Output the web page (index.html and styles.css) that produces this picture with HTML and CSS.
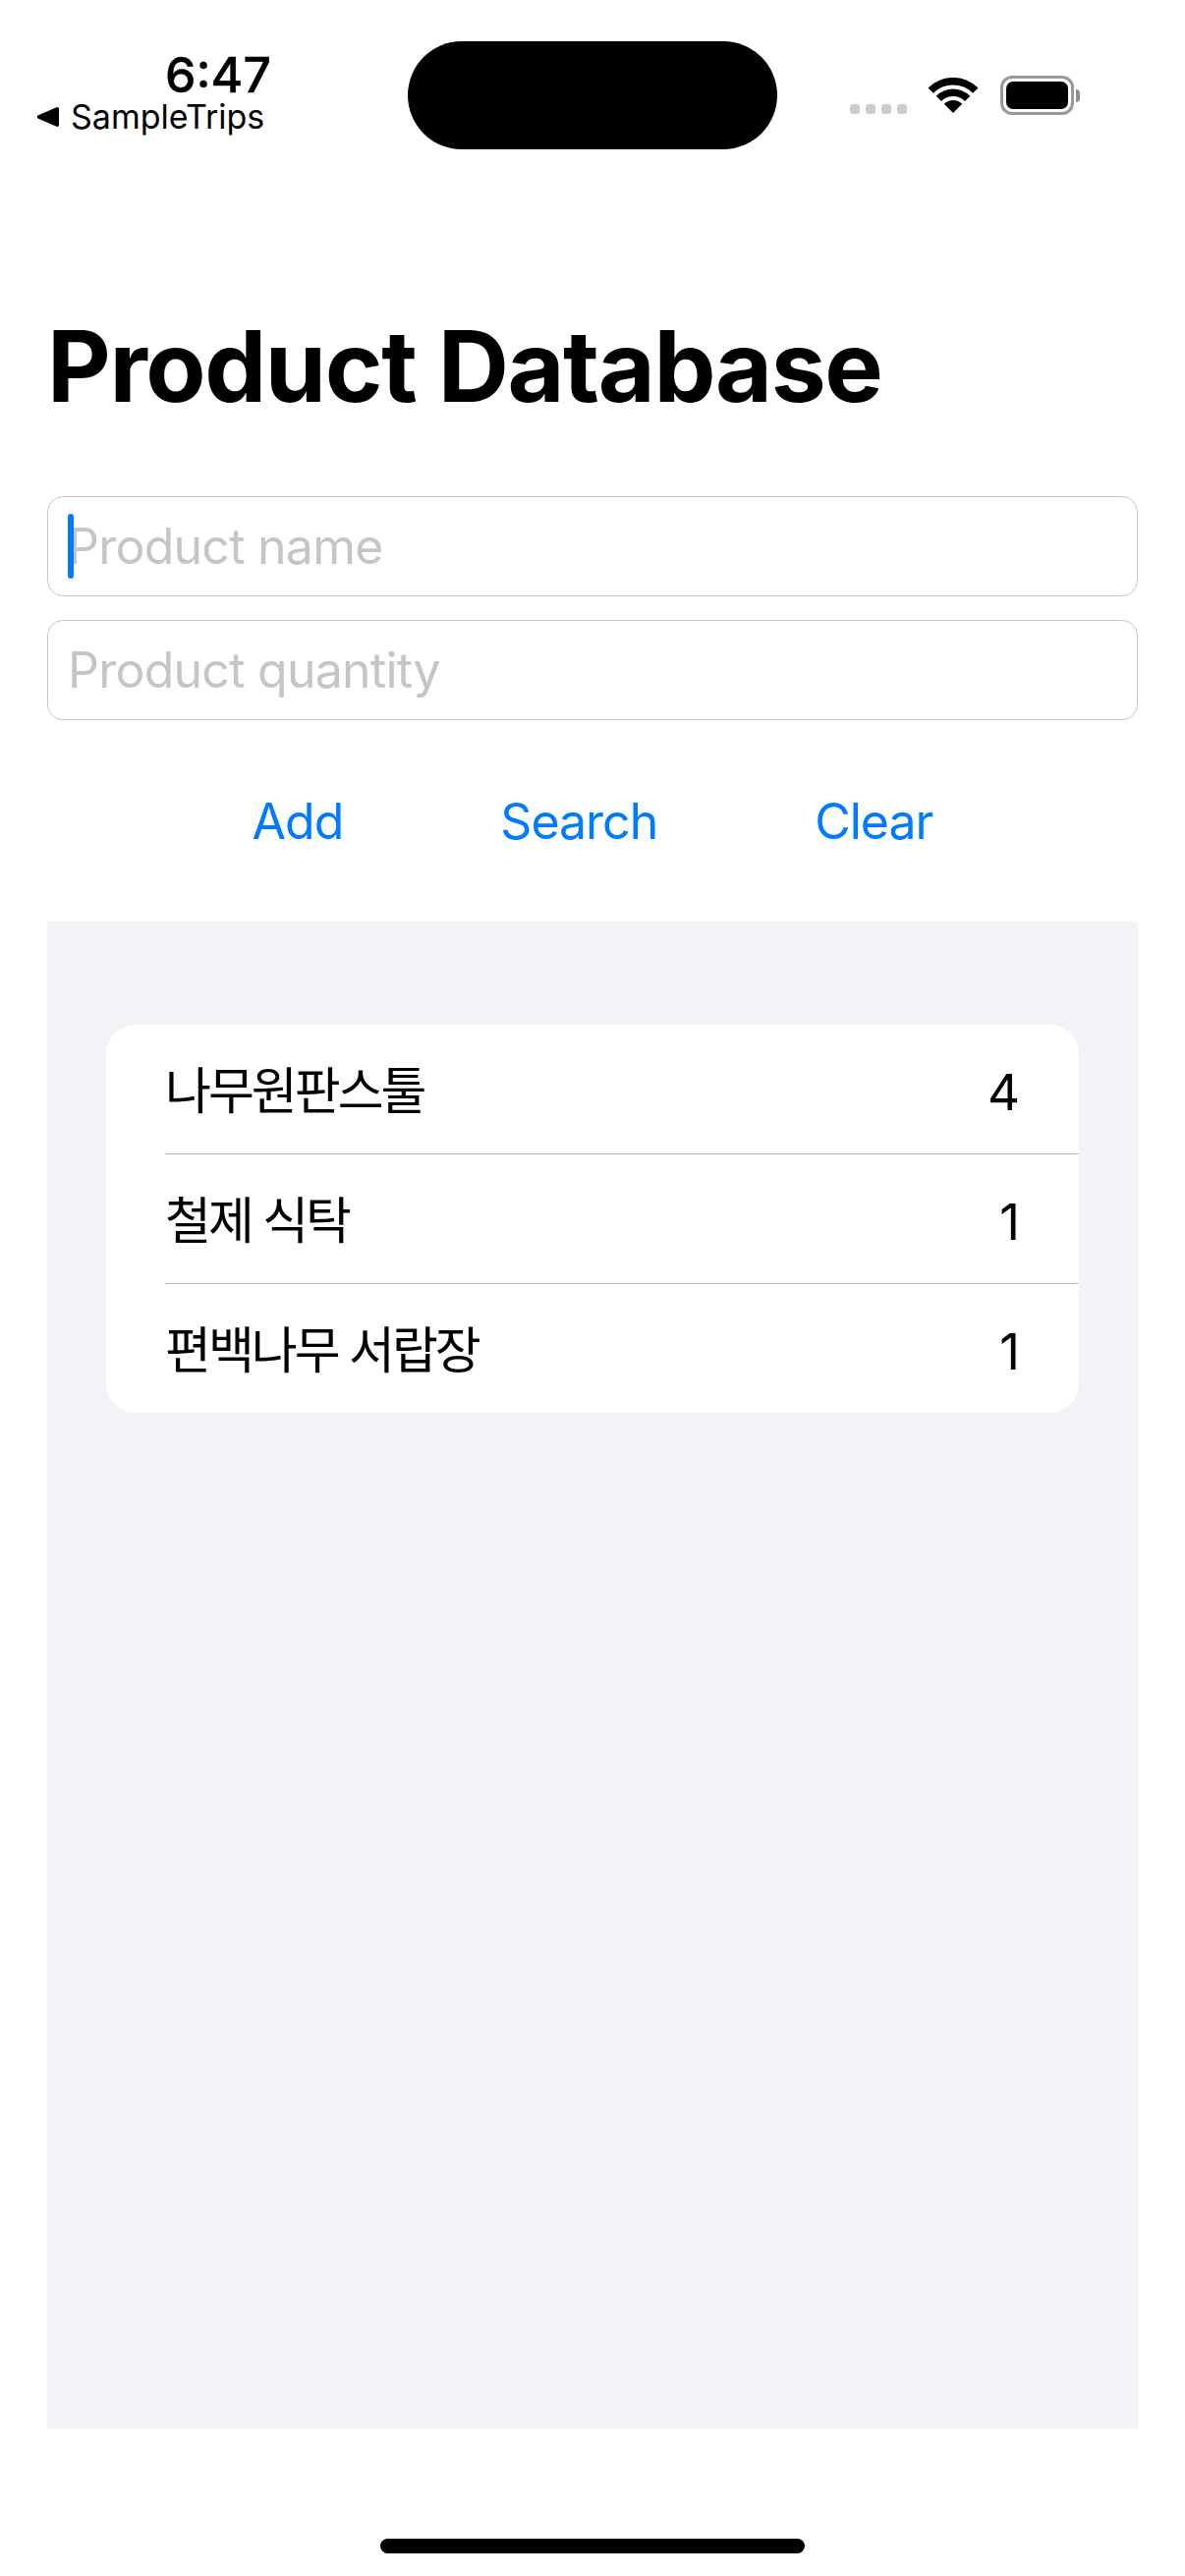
FILE: index.html
```html
<!DOCTYPE html>
<html lang="en">
<head>
  <meta charset="UTF-8">
  <title>Product Database</title>
  <link rel="stylesheet" href="styles.css">
</head>
<body>

<div class="screen">
  <div class="statusbar">
    <div class="status-left">
      <div class="time">6:47</div>
      <div class="back">
        <svg class="back-arrow" viewBox="0 0 23 22"><path d="M20 1.4 L1.4 9.4 Q0 11 1.4 12.6 L20 20.6 Q23 21.6 23 19 L23 3 Q23 .4 20 1.4 Z"/></svg>
        <span>SampleTrips</span>
      </div>
    </div>
    <div class="island"></div>
    <div class="status-right">
      <div class="signal">
        <i></i><i></i><i></i><i></i>
      </div>
      <svg class="wifi" viewBox="0 0 52 36">
        <path d="M.5 10.5A36 36 0 0 1 51.5 10.5L46.2 15.8A28.5 28.5 0 0 0 5.8 15.8Z"/>
        <path d="M8.7 18.7A24.5 24.5 0 0 1 43.3 18.7L38 24A17 17 0 0 0 14 24Z"/>
        <path d="M16.8 26.8A13 13 0 0 1 35.2 26.8L26 36Z"/>
      </svg>
      <div class="battery">
        <div class="battery-body"><div class="battery-level"></div></div>
        <div class="battery-cap"></div>
      </div>
    </div>
  </div>

  <div class="content">
    <h1>Product Database</h1>

    <div class="field">
      <input type="text" placeholder="Product name">
      <span class="caret"></span>
    </div>
    <div class="field">
      <input type="text" placeholder="Product quantity">
    </div>

    <div class="actions">
      <button>Add</button>
      <button>Search</button>
      <button>Clear</button>
    </div>

    <div class="results">
      <ul class="list">
        <li><span class="name">나무원판스툴</span><span class="qty">4</span></li>
        <li><span class="name">철제 식탁</span><span class="qty">1</span></li>
        <li><span class="name">편백나무 서랍장</span><span class="qty">1</span></li>
      </ul>
    </div>
  </div>

  <div class="home-bar"><div class="home-indicator"></div></div>
</div>

</body>
</html>
```

FILE: styles.css
```css
* {
  box-sizing: border-box;
}
body {
  margin: 0;
  background: white;
  font-family: Inter, "Noto Sans CJK KR", sans-serif;
  color: black;
}
.screen {
  width: 1206px;
  height: 2622px;
  display: flex;
  flex-direction: column;
  overflow: hidden;
}

/* status bar */
.statusbar {
  height: 152px;
  padding-top: 42px;
  display: grid;
  grid-template-columns: 415px 376px 1fr;
}
.status-left {
  padding: 12px 0 0 37px;
  width: 276px;
  display: flex;
  flex-direction: column;
}
.time {
  font-size: 50px;
  font-weight: 500;
  line-height: 44px;
  text-align: right;
  -webkit-text-stroke: 0.4px black;
}
.back {
  display: flex;
  align-items: center;
  margin-top: 1px;
  gap: 12px;
  font-size: 34px;
  line-height: 40px;
  white-space: nowrap;
}
.back-arrow {
  flex: none;
  width: 23px;
  height: 22px;
  fill: black;
}
.island {
  height: 110px;
  background: black;
  border-radius: 55px;
}
.status-right {
  display: flex;
  align-items: flex-start;
  padding: 35px 0 0 74px;
}
.signal {
  display: flex;
  gap: 6px;
  margin-top: 29px;
  width: 79px;
}
.signal i {
  width: 10px;
  height: 10px;
  border-radius: 3px;
  background: #cccccc;
}
.wifi {
  width: 52px;
  height: 36px;
  margin-top: 2px;
  fill: black;
}
.battery {
  display: flex;
  align-items: center;
  margin-left: 22px;
}
.battery-body {
  width: 75px;
  height: 40px;
  border: 3px solid #999999;
  border-radius: 12px;
  padding: 3px;
}
.battery-level {
  height: 100%;
  background: black;
  border-radius: 7px;
}
.battery-cap {
  width: 4px;
  height: 13px;
  margin-left: 2px;
  background: #8e8e8e;
  border-radius: 0 4px 4px 0;
}

/* main content */
.content {
  flex: 1;
  padding: 0 48px;
  display: flex;
  flex-direction: column;
}
h1 {
  margin: 161px 0 0;
  font-size: 100px;
  font-weight: 700;
  line-height: 120px;
  letter-spacing: -1.4px;
}
.field {
  position: relative;
  height: 102px;
  margin-top: 72px;
}
.field + .field {
  margin-top: 24px;
}
.field input {
  width: 100%;
  height: 100%;
  padding: 0 20px;
  border: 1px solid #c6c6c8;
  border-radius: 16px;
  background: white;
  font-family: inherit;
  font-size: 50px;
  letter-spacing: -0.75px;
  outline: none;
}
.field input::placeholder {
  color: #c5c5c7;
}
.caret {
  position: absolute;
  left: 21px;
  top: 18px;
  width: 6px;
  height: 66px;
  border-radius: 3px;
  background: #007aff;
}
.actions {
  display: flex;
  justify-content: center;
  gap: 160px;
  margin-top: 70px;
}
.actions button {
  padding: 0;
  border: none;
  background: none;
  color: #007aff;
  font-family: inherit;
  font-size: 50px;
  letter-spacing: -1px;
  line-height: 66px;
}
.results {
  height: 1534px;
  margin-top: 69px;
  padding: 105px 60px 0;
  background: #f2f2f7;
}
.list {
  list-style: none;
  margin: 0;
  padding: 0 0 0 60px;
  background: white;
  border-radius: 30px;
}
.list li {
  display: flex;
  justify-content: space-between;
  align-items: center;
  height: 132px;
  padding-right: 60px;
  font-size: 51px;
  border-top: 1px solid #bcbcbe;
}
.list li:first-child {
  height: 131px;
  border-top: none;
}
.name {
  margin-bottom: 3px;
  letter-spacing: -3px;
}
.qty {
  margin-top: 5px;
}

/* home indicator */
.home-bar {
  display: flex;
  justify-content: center;
  padding-bottom: 23px;
}
.home-indicator {
  width: 432px;
  height: 15px;
  background: black;
  border-radius: 8px;
}
```
